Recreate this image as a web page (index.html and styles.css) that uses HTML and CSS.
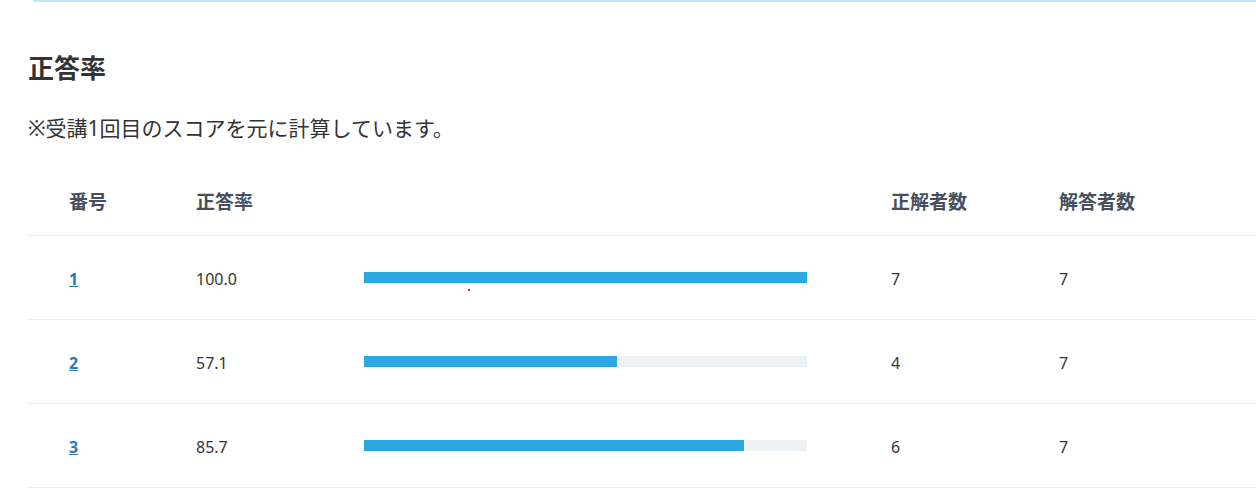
FILE: index.html
```html
<!DOCTYPE html>
<html lang="ja">
<head>
    <meta charset="UTF-8">
    <meta name="viewport" content="width=device-width, initial-scale=1.0">
    <title>正答率</title>
    <link rel="stylesheet" href="styles.css">
</head>
<body>
    <div class="card-edge"></div>

    <div class="score-section">
        <h2>正答率</h2>
        <p class="note">※受講1回目のスコアを元に計算しています。</p>

        <table class="rate-table">
            <colgroup>
                <col class="col-no">
                <col class="col-rate">
                <col class="col-bar">
                <col class="col-count">
                <col>
            </colgroup>
            <thead>
                <tr>
                    <th>番号</th>
                    <th>正答率</th>
                    <th></th>
                    <th>正解者数</th>
                    <th>解答者数</th>
                </tr>
            </thead>
            <tbody>
                <tr>
                    <td><a href="#">1</a></td>
                    <td>100.0</td>
                    <td class="bar-cell">
                        <div class="bar"><div class="bar-fill" style="width: 100%"></div></div>
                        <span class="marker"></span>
                    </td>
                    <td>7</td>
                    <td>7</td>
                </tr>
                <tr>
                    <td><a href="#">2</a></td>
                    <td>57.1</td>
                    <td class="bar-cell">
                        <div class="bar"><div class="bar-fill" style="width: 57.1%"></div></div>
                    </td>
                    <td>4</td>
                    <td>7</td>
                </tr>
                <tr>
                    <td><a href="#">3</a></td>
                    <td>85.7</td>
                    <td class="bar-cell">
                        <div class="bar"><div class="bar-fill" style="width: 85.7%"></div></div>
                    </td>
                    <td>6</td>
                    <td>7</td>
                </tr>
            </tbody>
        </table>
    </div>
</body>
</html>
```

FILE: styles.css
```css
html, body {
    overflow: hidden;
}

body {
    font-family: "Noto Sans", "Noto Sans CJK JP", sans-serif;
    background-color: #ffffff;
    color: #333333;
    margin: 0;
}

.card-edge {
    height: 2px;
    margin-left: 33px;
    background-color: #bfe3f8;
    border-bottom-left-radius: 2px;
}

.score-section {
    padding-left: 28px;
}

h2 {
    font-size: 26px;
    font-weight: bold;
    line-height: 37px;
    margin: 48px 0 0;
    color: #333333;
}

.note {
    font-size: 21px;
    line-height: 30px;
    margin: 26px 0 0;
    color: #333333;
}

.rate-table {
    width: 100%;
    margin-top: 24px;
    border-collapse: collapse;
    table-layout: fixed;
}

.col-no {
    width: 127px;
}

.col-rate {
    width: 168px;
}

.col-bar {
    width: 527px;
}

.col-count {
    width: 168px;
}

.rate-table th,
.rate-table td {
    text-align: left;
    padding: 0 0 0 41px;
    border-bottom: 1px solid #ececec;
}

.rate-table th {
    height: 68px;
    font-size: 19px;
    font-weight: bold;
    color: #464f5e;
}

.rate-table td {
    height: 81px;
    font-size: 16px;
    color: #333333;
    padding-top: 2px;
}

.rate-table a {
    color: #2a78b9;
    font-weight: bold;
    text-decoration: underline;
}

.bar-cell {
    position: relative;
    padding-right: 43px !important;
}

.bar {
    height: 11px;
    background-color: #ecf1f6;
    margin-top: -3px;
}

.bar-fill {
    height: 100%;
    background-color: #2ba8e0;
}

.marker {
    position: absolute;
    left: 145px;
    top: 53px;
    width: 2px;
    height: 2px;
    background-color: #e0202a;
}
```
